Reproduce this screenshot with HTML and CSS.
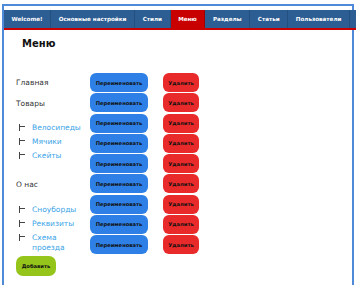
FILE: index.html
```html
<!DOCTYPE html>
<html lang="ru">
<head>
  <meta charset="UTF-8" />
  <meta name="viewport" content="width=device-width, initial-scale=1.0" />
  <title>Меню</title>
  <link rel="stylesheet" href="styles.css">
</head>
<body>
  <div class="frame">
    <ul class="nav">
      <li><a href="#">Welcome!</a></li>
      <li><a href="#">Основные настройки</a></li>
      <li><a href="#">Стили</a></li>
      <li class="active"><a href="#">Меню</a></li>
      <li><a href="#">Разделы</a></li>
      <li><a href="#">Статьи</a></li>
      <li><a href="#">Пользователи</a></li>
      <li class="nav-fill"></li>
    </ul>

    <h1 class="page-title">Меню</h1>

    <div class="menu-editor">
      <div class="menu-tree">
        <ul class="tree">
          <li class="tree-item"><span class="tree-label">Главная</span></li>
          <li class="tree-item"><span class="tree-label">Товары</span>
            <ul class="sub-list">
              <li><a href="#">Велосипеды</a></li>
              <li><a href="#">Мячики</a></li>
              <li><a href="#">Скейты</a></li>
            </ul>
          </li>
          <li class="tree-item"><span class="tree-label">О нас</span>
            <ul class="sub-list">
              <li><a href="#">Сноуборды</a></li>
              <li><a href="#">Реквизиты</a></li>
              <li><a href="#">Схема проезда</a></li>
            </ul>
          </li>
        </ul>
        <button class="btn btn-add">Добавить</button>
      </div>

      <div class="menu-actions">
        <div class="action-row"><button class="btn btn-rename">Переименовать</button><button class="btn btn-delete">Удалить</button></div>
        <div class="action-row"><button class="btn btn-rename">Переименовать</button><button class="btn btn-delete">Удалить</button></div>
        <div class="action-row"><button class="btn btn-rename">Переименовать</button><button class="btn btn-delete">Удалить</button></div>
        <div class="action-row"><button class="btn btn-rename">Переименовать</button><button class="btn btn-delete">Удалить</button></div>
        <div class="action-row"><button class="btn btn-rename">Переименовать</button><button class="btn btn-delete">Удалить</button></div>
        <div class="action-row"><button class="btn btn-rename">Переименовать</button><button class="btn btn-delete">Удалить</button></div>
        <div class="action-row"><button class="btn btn-rename">Переименовать</button><button class="btn btn-delete">Удалить</button></div>
        <div class="action-row"><button class="btn btn-rename">Переименовать</button><button class="btn btn-delete">Удалить</button></div>
        <div class="action-row"><button class="btn btn-rename">Переименовать</button><button class="btn btn-delete">Удалить</button></div>
      </div>
    </div>
  </div>
</body>
</html>
```

FILE: styles.css
```css
body { margin: 0; background: #fff; font-family: 'DejaVu Sans', Verdana, sans-serif; overflow: hidden; }
.frame { margin: 4px 0 0 2px; width: 348px; height: 275px; border: 2px solid #4f8ad9; padding-top: 4px; box-sizing: content-box; }
.nav { display: flex; list-style: none; margin: 0 -6px 0 0; padding: 0; height: 18px; background: #2d5e93; border-bottom: 2px solid #c80000; }
.nav li { display: flex; align-items: center; border-right: 1px solid #24507f; }
.nav li.nav-fill { flex: 1; border-right: none; }
.nav li.active { background: #c80000; border-right-color: #a00000; }
.nav a { color: #fff; text-decoration: none; font-family: 'DejaVu Sans', sans-serif; font-weight: bold; font-size: 5.6px; padding: 0 7.6px; white-space: nowrap; }
.page-title { margin: 7px 0 0 18px; font-family: 'DejaVu Sans', sans-serif; font-size: 10px; line-height: 14px; color: #111; }
.menu-editor { display: flex; margin-top: 22px; padding-left: 12px; }
.menu-tree { width: 74px; }
.tree { list-style: none; margin: 0; padding: 0; }
.tree-label { display: block; line-height: 20.5px; font-size: 7.5px; color: #333; }
.sub-list { list-style: none; margin: 7px 0 12px; padding: 0; }
.tree-item:last-child .sub-list { margin-bottom: 0; }
.sub-list li { display: flex; align-items: flex-start; padding: 2px 0; line-height: 10px; font-size: 7.5px; }
.sub-list li::before { content: ''; flex: none; width: 5px; height: 7px; margin: 1px 7px 0 3px; border-left: 1px solid #444; background: linear-gradient(#444, #444) no-repeat 0 2px / 5px 1px; }
.sub-list a { color: #3aa3e6; text-decoration: none; }
.btn { border: none; border-radius: 6px; font-family: 'DejaVu Sans', sans-serif; font-weight: bold; font-size: 5.2px; color: #111; padding: 0; height: 19px; cursor: pointer; }
.btn-add { display: block; margin-top: 1px; width: 40px; height: 20px; background: #95c41b; border-radius: 7px; }
.menu-actions { display: flex; flex-direction: column; gap: 1.25px; }
.action-row { display: flex; gap: 15px; }
.btn-rename { width: 58px; background: #2f80e6; }
.btn-delete { width: 36px; background: #e82a2a; }
```
